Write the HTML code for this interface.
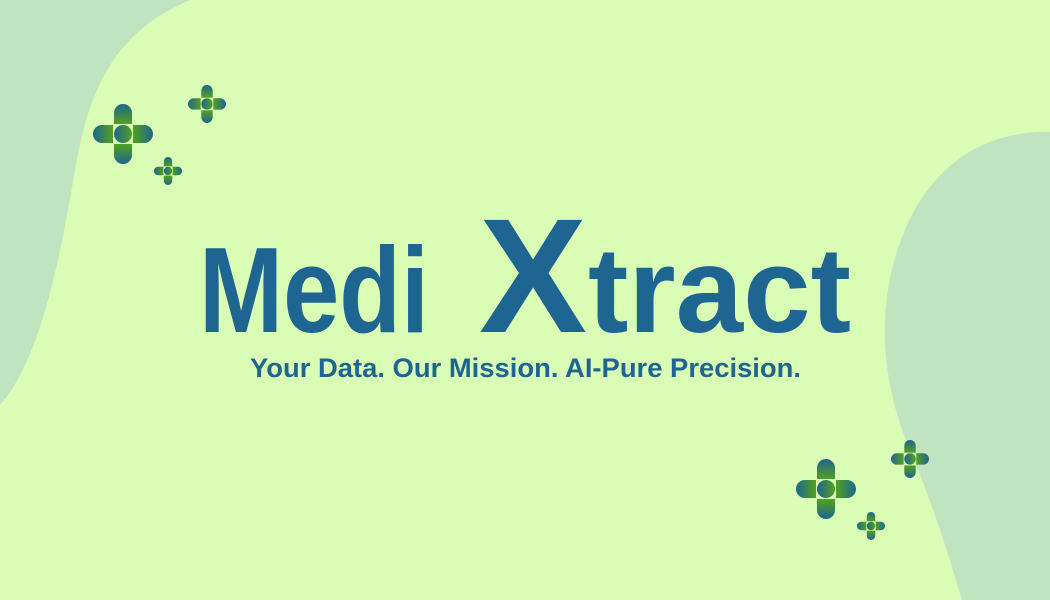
<!DOCTYPE html>
<html><head><meta charset="utf-8"><style>
html,body{margin:0;padding:0;width:1050px;height:600px;overflow:hidden;background:#d9fdb5}
svg{position:absolute;left:0;top:0}
</style></head><body>
<svg width="1050" height="600" viewBox="0 0 1050 600" xmlns="http://www.w3.org/2000/svg">
<defs>
<linearGradient id="gT" x1="0" y1="0" x2="0" y2="1"><stop offset="0" stop-color="#1f6591"/><stop offset="1" stop-color="#52a020"/></linearGradient>
<linearGradient id="gB" x1="0" y1="0" x2="0" y2="1"><stop offset="0" stop-color="#52a020"/><stop offset="1" stop-color="#1f6591"/></linearGradient>
<linearGradient id="gL" x1="0" y1="0" x2="1" y2="0"><stop offset="0" stop-color="#1f6591"/><stop offset="1" stop-color="#52a020"/></linearGradient>
<linearGradient id="gR" x1="0" y1="0" x2="1" y2="0"><stop offset="0" stop-color="#52a020"/><stop offset="1" stop-color="#1f6591"/></linearGradient>
<g id="plus">
<path d="M21 20 V9 A9 9 0 0 1 39 9 V20 Z" fill="url(#gT)"/>
<path d="M21 40 V51 A9 9 0 0 0 39 51 V40 Z" fill="url(#gB)"/>
<path d="M20 21 H9 A9 9 0 0 0 9 39 H20 Z" fill="url(#gL)"/>
<path d="M40 21 H51 A9 9 0 0 1 51 39 H40 Z" fill="url(#gR)"/>
<circle cx="30" cy="30" r="9" fill="url(#gL)"/>
</g>
</defs>
<path d="M0 0 H190 C120 30 90 80 75 170 C60 260 40 360 0 405 Z" fill="#c0e3c0"/>
<path d="M1050 132 C980 130 930 170 905 230 C875 300 880 380 910 450 C935 510 950 560 962 600 H1050 Z" fill="#c0e3c0"/>
<use href="#plus" transform="translate(93,104)"/>
<use href="#plus" transform="translate(188,85) scale(0.633)"/>
<use href="#plus" transform="translate(154,157) scale(0.467)"/>
<use href="#plus" transform="translate(796,459)"/>
<use href="#plus" transform="translate(891,440) scale(0.633)"/>
<use href="#plus" transform="translate(857,512) scale(0.467)"/>
<g fill="#1f6591" font-family="Liberation Sans, Arial, sans-serif" font-weight="bold">
<text x="199" y="332" font-size="122" textLength="230" lengthAdjust="spacingAndGlyphs">Medi</text>
<text x="479" y="332" font-size="163" textLength="108" lengthAdjust="spacingAndGlyphs">X</text>
<text x="588" y="332" font-size="122" textLength="263" lengthAdjust="spacingAndGlyphs">tract</text>
<text x="250" y="377" font-size="27" textLength="551" lengthAdjust="spacingAndGlyphs">Your Data. Our Mission. AI-Pure Precision.</text>
</g>
</svg>
</body></html>
